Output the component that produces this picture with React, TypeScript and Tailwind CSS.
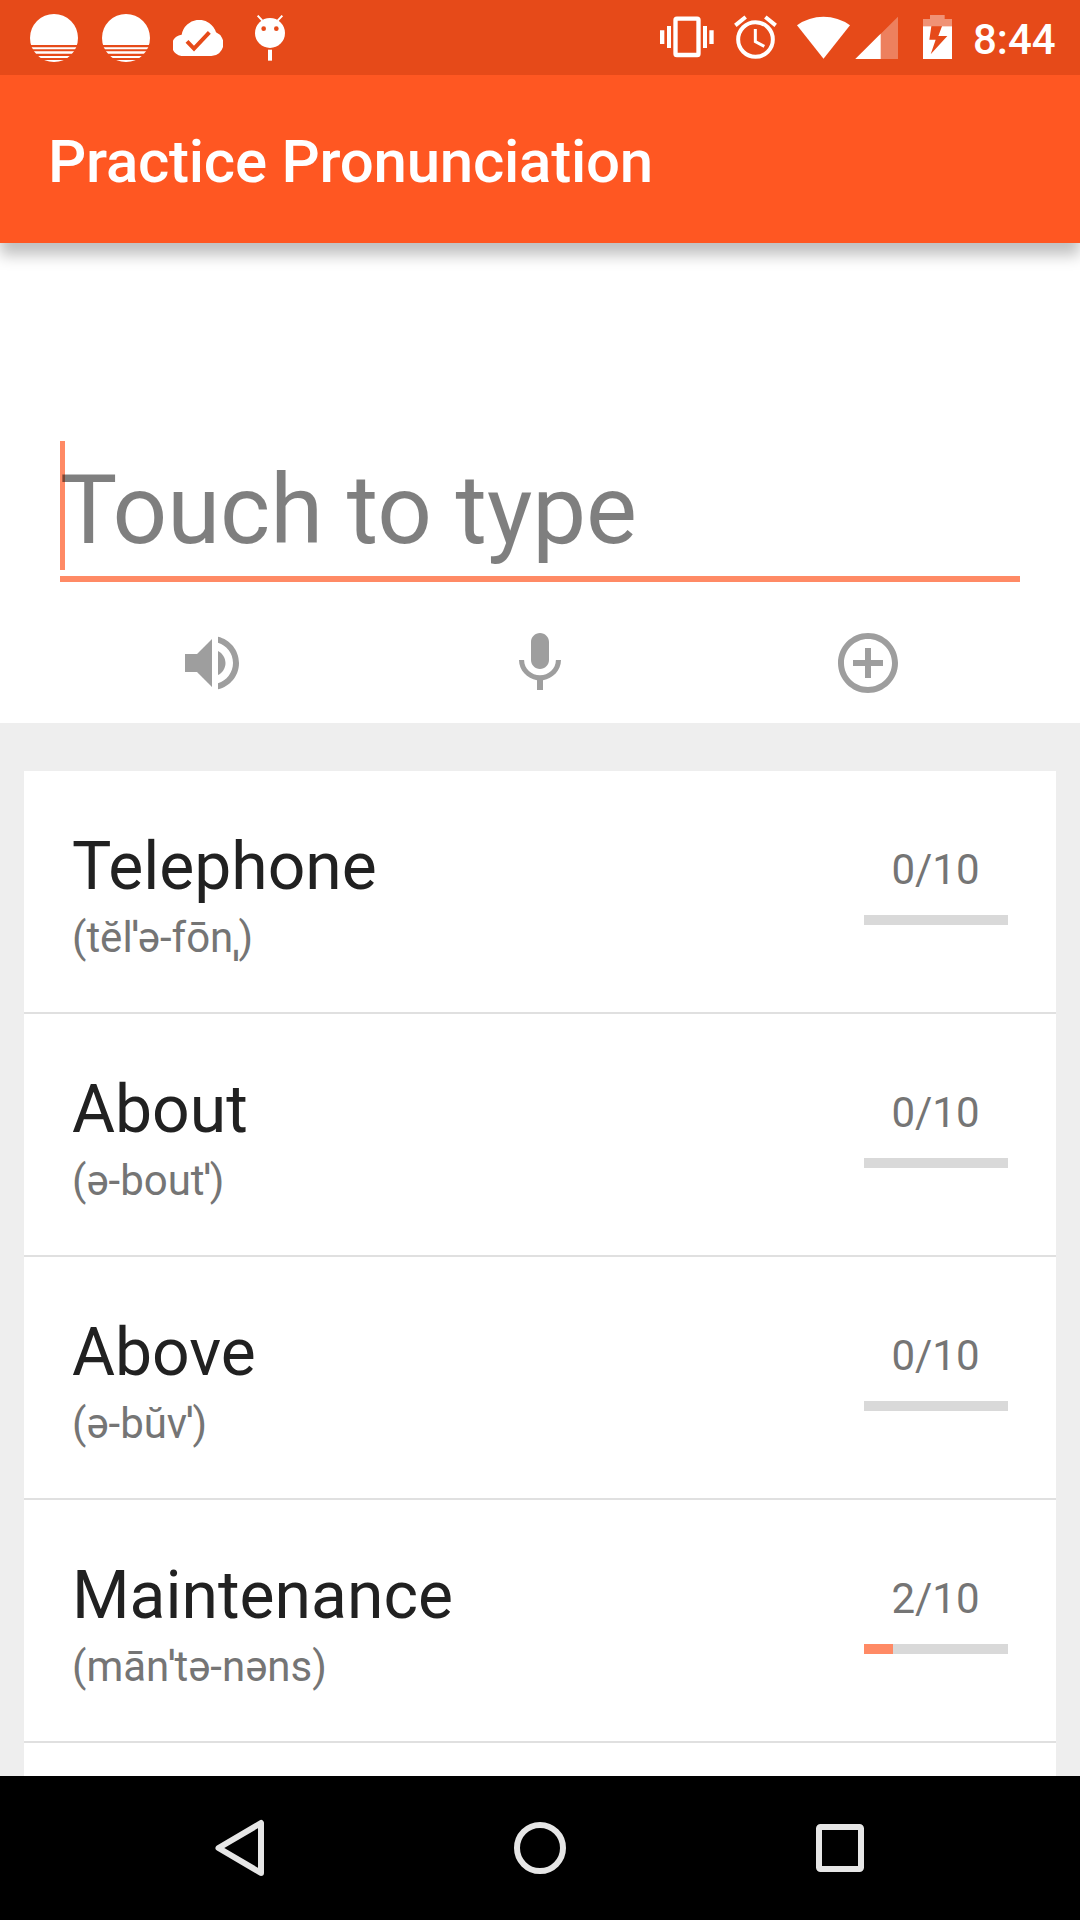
import React from "react";

const words = [
  { word: "Telephone", phonetic: "(tĕlˈə-fōnˌ)", score: 0 },
  { word: "About", phonetic: "(ə-boutˈ)", score: 0 },
  { word: "Above", phonetic: "(ə-bŭvˈ)", score: 0 },
  { word: "Maintenance", phonetic: "(mānˈtə-nəns)", score: 2 },
];

function Sunset() {
  return (
    <svg className="h-12 w-12" viewBox="0 0 144 144" fill="#fff">
      <clipPath id="sun">
        <circle cx="72" cy="72" r="72" />
      </clipPath>
      <g clipPath="url(#sun)">
        <path d="M0 0h144v93H0zM0 100h144v6H0zM0 112h144v7H0zM0 126h144v6H0zM0 138h144v6H0z" />
      </g>
    </svg>
  );
}

function CloudDone() {
  return (
    <svg className="h-9 w-[50px]" viewBox="519 60 150 108">
      <path
        fill="#fff"
        d="M551 168A32 32 0 0 1 545 104A53 53 0 0 1 648 97A37 37 0 0 1 634 168Z"
      />
      <path d="M561 124L582 146L628 97" fill="none" stroke="#E64A19" strokeWidth="12" />
    </svg>
  );
}

function DebugBug() {
  return (
    <svg className="h-[46px] w-[30px]" viewBox="765 47 90 138" fill="#fff">
      <circle cx="810" cy="101" r="45" />
      <path d="M773 49L787 64M847 49L833 64" stroke="#fff" strokeWidth="6" />
      <circle cx="791" cy="88" r="7" fill="#E64A19" />
      <circle cx="829" cy="88" r="7" fill="#E64A19" />
      <path d="M804 151h12v33h-12z" />
    </svg>
  );
}

function SystemIcons() {
  return (
    <svg className="h-[45px] w-[293px]" viewBox="60 45 879 135" fill="#fff">
      {/* vibrate */}
      <path d="M60 91h13v41H60zM81 78h12v66H81zM189 78h12v66h-12zM208 91h13v41h-13z" />
      <rect x="106.500" y="56" width="69" height="109" rx="4" fill="none" stroke="#fff" strokeWidth="13" />
      {/* alarm */}
      <g fill="none" stroke="#fff">
        <circle cx="346.500" cy="118.500" r="52" strokeWidth="12" />
        <path d="M346 87V125L373 139" strokeWidth="9" />
        <path d="M286 76L317 51M376 51L407 76" strokeWidth="12" />
      </g>
      {/* wifi */}
      <path d="M550.500 176L471 76A136 136 0 0 1 630 76Z" />
      {/* signal */}
      <path d="M646 177H774V50Z" opacity=".3" />
      <path d="M646 177H722V101Z" />
      {/* battery */}
      <path d="M849 79V57H870V45H914V57H936V79Z" opacity=".4" />
      <path
        fillRule="evenodd"
        d="M849 79H936V177H849ZM874 79L868 119H887L872 163L922 108H895L906 79Z"
      />
    </svg>
  );
}

function VolumeIcon() {
  return (
    <svg className="size-[72px]" viewBox="0 0 24 24" fill="#9E9E9E">
      <path d="M3 9v6h4l5 5V4L7 9H3zm13.500 3c0-1.770-1.020-3.290-2.500-4.030v8.050c1.480-.730 2.500-2.250 2.500-4.020zM14 3.230v2.060c2.890.860 5 3.540 5 6.710s-2.110 5.850-5 6.710v2.060c4.010-.910 7-4.490 7-8.770s-2.990-7.860-7-8.770z" />
    </svg>
  );
}

function MicIcon() {
  return (
    <svg className="size-[72px]" viewBox="0 0 24 24" fill="#9E9E9E">
      <path d="M12 14c1.660 0 3-1.340 3-3V5c0-1.660-1.340-3-3-3S9 3.340 9 5v6c0 1.660 1.340 3 3 3zm5.300-3c0 3-2.540 5.100-5.300 5.100S6.700 14 6.700 11H5c0 3.410 2.720 6.230 6 6.720V21h2v-3.280c3.280-.480 6-3.300 6-6.720h-1.700z" />
    </svg>
  );
}

function AddIcon() {
  return (
    <svg className="size-[72px]" viewBox="0 0 24 24" fill="#9E9E9E">
      <path d="M13 7h-2v4H7v2h4v4h2v-4h4v-2h-4V7zm-1-5C6.480 2 2 6.480 2 12s4.480 10 10 10 10-4.480 10-10S17.520 2 12 2zm0 18c-4.410 0-8-3.590-8-8s3.590-8 8-8 8 3.590 8 8-3.590 8-8 8z" />
    </svg>
  );
}

function StatusBar() {
  return (
    <div className="flex h-[75px] items-start bg-[#E64A19] text-white">
      <div className="ml-[30px] mt-[13.700px] flex gap-6">
        <Sunset />
        <Sunset />
      </div>
      <div className="ml-[23px] mt-5">
        <CloudDone />
      </div>
      <div className="ml-8 mt-[15.300px]">
        <DebugBug />
      </div>
      <div className="ml-auto mt-[15px]">
        <SystemIcons />
      </div>
      <span className="ml-5 mr-6 mt-[15px] w-[83px] whitespace-nowrap text-[42px] font-medium leading-[50px]">8:44</span>
    </div>
  );
}

/* Stress marks are set tight against their neighbours. */
function Phonetic({ text }: { text: string }) {
  return (
    <p className="mt-[5px] whitespace-nowrap text-[42px] leading-[50px] text-[#757575]">
      {text.split(/([ˈˌ])/).map((part, i) =>
        part === "ˈ" || part === "ˌ" ? (
          <span key={i} className="inline-flex w-[5.200px] justify-center font-['Noto_Sans',sans-serif] font-medium">
            {part}
          </span>
        ) : (
          part
        ),
      )}
    </p>
  );
}

function WordRow({ word, phonetic, score }: { word: string; phonetic: string; score: number }) {
  return (
    <li className="flex h-[243px] shrink-0 justify-between border-b-2 border-[#E0E0E0] bg-white px-12">
      <div className="pt-[57px]">
        <h2 className="text-[66px] leading-[78px] text-[#212121]">{word}</h2>
        <Phonetic text={phonetic} />
      </div>
      <div className="w-36 pt-[74px]">
        <p className="pr-[1px] text-center text-[42px] leading-[50px] text-[#757575]">{score}/10</p>
        <div className="mt-[20px] h-[10px] bg-[#D9D9D9]">
          <div className="h-full bg-[#FF8A65]" style={{ width: `${score * 10}%` }} />
        </div>
      </div>
    </li>
  );
}

export default function App() {
  return (
    <div className="flex h-[1920px] w-[1080px] flex-col overflow-hidden bg-[#EEEEEE] font-['Roboto',sans-serif]">
      <header className="relative z-10 shrink-0 shadow-[0_12px_14px_rgba(0,0,0,0.25)]">
        <StatusBar />
        <div className="flex h-[168px] items-center bg-[#FF5722] px-12">
          <h1 className="pt-[5px] text-[60px] font-medium leading-[70px] tracking-[-0.250px] text-white">Practice Pronunciation</h1>
        </div>
      </header>

      <section className="h-[480px] shrink-0 bg-white px-12 pt-[198px]">
        <div className="mx-3 flex h-[141px] border-b-[6px] border-[#FF8A65]">
          <span className="h-[129px] w-[5px] bg-[#FF8A65]" />
          <span className="-ml-[5px] pt-[13px] text-[96px] leading-[112px] tracking-[-0.080px] text-black/50">Touch to type</span>
        </div>
        <div className="mt-[45px] grid grid-cols-3 justify-items-center">
          <VolumeIcon />
          <MicIcon />
          <AddIcon />
        </div>
      </section>

      <ul className="flex min-h-0 flex-1 flex-col overflow-hidden px-6 pt-12">
        {words.map((w) => (
          <WordRow key={w.word} {...w} />
        ))}
        <li className="flex-1 bg-white" />
      </ul>

      <nav className="grid h-36 shrink-0 grid-cols-3 place-items-center bg-black px-[90px]">
        <svg className="size-[60px]" viewBox="210 1818 60 60" fill="none" stroke="#E6E6E6" strokeWidth="6" strokeLinejoin="round">
          <path d="M261 1823V1873L218.500 1848Z" />
        </svg>
        <svg className="size-[60px]" viewBox="510 1818 60 60" fill="none" stroke="#E6E6E6" strokeWidth="6">
          <circle cx="540" cy="1848" r="23" />
        </svg>
        <svg className="size-[60px]" viewBox="810 1818 60 60" fill="none" stroke="#E6E6E6" strokeWidth="6">
          <rect x="819" y="1827" width="42" height="42" rx="1.500" />
        </svg>
      </nav>
    </div>
  );
}
